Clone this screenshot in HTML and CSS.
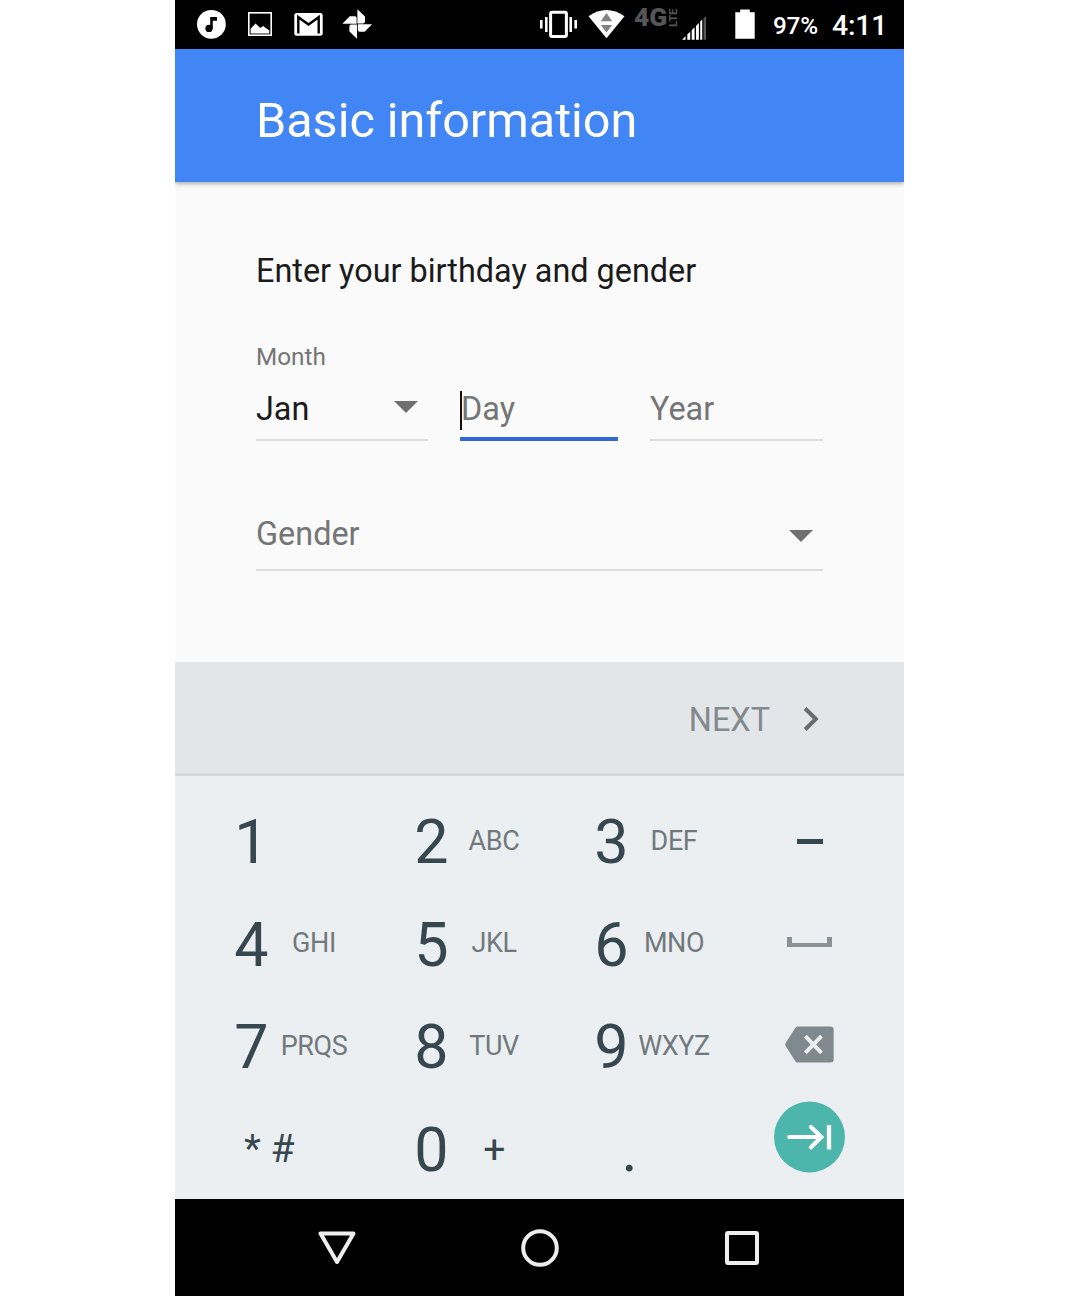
FILE: index.html
```html
<!DOCTYPE html>
<html lang="en">
<head>
<meta charset="utf-8">
<title>Basic information</title>
<link rel="stylesheet" href="styles.css">
</head>
<body>
<main class="phone">
  <div class="status">
    <svg class="note" width="30" height="48" viewBox="197 0 30 48"><circle cx="211.4" cy="24.3" r="14.4" fill="#fff"/><circle cx="209" cy="28.4" r="3.6" fill="#000"/><path d="M210.2 28V17h6.800v3.800h-4.200v7.600z" fill="#000"/></svg>
    <svg class="photo" width="24" height="48" viewBox="248 0 24 48"><rect x="248.8" y="12.8" width="22.4" height="22.4" fill="none" stroke="#fff" stroke-width="1.6"/><path d="M250.6 33.6v-4.800l4.900-5.200 4.800 4.400 2.800-2 6.200 4.600v3z" fill="#fff"/></svg>
    <svg class="mail" width="29" height="48" viewBox="294 0 29 48"><rect x="294.300" y="13" width="28.400" height="22.700" rx="2.500" fill="#fff"/><path d="M298.300 33.400V17.200l10.200 7.300 10.200-7.300v16.200" fill="none" stroke="#000" stroke-width="2.400"/><path d="M299 15.200h19l-9.500 6.600z" fill="#fff"/></svg>
    <svg class="pinwheel" width="30" height="48" viewBox="342 0 30 48"><g fill="#fff"><path d="M357.400 23.400V9.200l7.600 7.400v5q0 1.800-1.800 1.800z"/><path d="M357.400 23.400V9.200l7.600 7.400v5q0 1.800-1.800 1.800z" transform="rotate(90 357.200 24)"/><path d="M357.400 23.400V9.200l7.600 7.400v5q0 1.800-1.800 1.800z" transform="rotate(180 357.200 24)"/><path d="M357.400 23.400V9.200l7.600 7.400v5q0 1.800-1.800 1.800z" transform="rotate(270 357.200 24)"/></g></svg>
    <svg class="vibrate" width="37" height="48" viewBox="540 0 37 48"><rect x="550.600" y="12.200" width="15.800" height="24.200" rx="1.500" fill="none" stroke="#fff" stroke-width="3"/><path d="M541.300 20v8.500M546.300 17v15M570.700 17v15M575.700 20v8.500" stroke="#fff" stroke-width="2.600"/></svg>
    <svg class="wifi" width="37" height="48" viewBox="588.200 0 37 48"><path d="M606.700 38.200L588.700 16.200Q606.700 3.600 624.700 16.200z" fill="#fff"/><path d="M601 21.200l5.700-8.200 5.700 8.200zM601 25l5.700 7.600 5.700-7.600z" fill="#828282"/></svg>
    <span class="net">4G</span><span class="lte">LTE</span>
    <svg class="signal" width="25" height="48" viewBox="682 0 25 48"><path d="M682 39.800l3.600-3.600v3.600zM687.300 39.800v-5.200l2.900-2.900v8.100zM691.700 39.800v-9.600l2.900-2.900v12.500zM696 39.800V25.900l2.900-2.900v16.800zM700.200 39.800V21.600l2-2v20.200z" fill="#fff"/><path d="M703.500 39.800V18.600l2.600-2.600v23.800z" fill="#555"/></svg>
    <svg class="battery" width="20" height="48" viewBox="735 0 20 48"><path d="M740.200 12.200V9.600h9.600v2.600h4.900v26.600h-19.400V12.200z" fill="#fff"/></svg>
    <span class="percent">97%</span>
    <span class="clock">4:11</span>
  </div>

  <header class="appbar"><h1>Basic information</h1></header>

  <section class="form">
    <p class="prompt">Enter your birthday and gender</p>
    <p class="caption">Month</p>
    <div class="fields">
      <div class="field month"><span>Jan</span><svg width="24" height="12" viewBox="0 0 24 12"><path d="M0 0h24L12 12z"/></svg></div>
      <div class="field day"><i class="caret"></i><span>Day</span></div>
      <div class="field year"><span>Year</span></div>
    </div>
    <div class="field gender"><span>Gender</span><svg width="24" height="12" viewBox="0 0 24 12"><path d="M0 0h24L12 12z"/></svg></div>
  </section>

  <div class="next"><span>NEXT</span><svg width="17" height="26" viewBox="0 0 17 26"><path d="M2.200 2.500L12.800 13 2.200 23.500" fill="none" stroke="#696d70" stroke-width="4"/></svg></div>

  <section class="keypad">
    <div class="key"><b>1</b></div>
    <div class="key"><b>2</b><span>ABC</span></div>
    <div class="key"><b>3</b><span>DEF</span></div>
    <div class="action"><i class="dash"></i></div>

    <div class="key"><b>4</b><span>GHI</span></div>
    <div class="key"><b>5</b><span>JKL</span></div>
    <div class="key"><b>6</b><span>MNO</span></div>
    <div class="action"><i class="space"></i></div>

    <div class="key"><b>7</b><span>PRQS</span></div>
    <div class="key"><b>8</b><span>TUV</span></div>
    <div class="key"><b>9</b><span>WXYZ</span></div>
    <div class="action erase"><svg width="49" height="37" viewBox="0 0 49 37"><path d="M12.500 .5H45.500Q48.700 .5 48.700 3.700V33.300Q48.700 36.500 45.500 36.500H12.500Q11.200 36.500 10.200 35L.8 20.300Q-.2 18.500 .8 16.700L10.200 2Q11.200 .5 12.500 .5z" fill="#80898e"/><path d="M20.300 10.200l16.200 16.600M36.500 10.200L20.300 26.800" stroke="#ebeff2" stroke-width="4"/></svg></div>

    <div class="key symbols">* #</div>
    <div class="key"><b>0</b><span class="plus">+</span></div>
    <div class="key period"><b>.</b></div>
    <div class="action enter"><svg width="72" height="72" viewBox="0 0 72 72"><circle cx="36.500" cy="36" r="35.500" fill="#4db6ac"/><path d="M16.300 36H47.500M38 26L48.300 36 38 46.200" fill="none" stroke="#fff" stroke-width="4.200" stroke-linecap="round"/><path d="M56 24v24.500" stroke="#fff" stroke-width="4.300"/></svg></div>
  </section>

  <nav class="navbar">
    <svg width="38" height="34" viewBox="0 0 38 34"><path d="M2.500 2.500h33L19 31z" fill="none" stroke="#eee" stroke-width="4" stroke-linejoin="round"/></svg>
    <svg class="home" width="38" height="38" viewBox="0 0 38 38"><circle cx="19" cy="19" r="16.800" fill="none" stroke="#eee" stroke-width="4"/></svg>
    <svg width="34" height="34" viewBox="0 0 34 34"><rect x="2" y="2" width="30" height="30" rx="1" fill="none" stroke="#eee" stroke-width="4"/></svg>
  </nav>
</main>
</body>
</html>
```
FILE: styles.css
```css
* { box-sizing: border-box; }
body { margin: 0; background: #fff; font-family: Roboto, sans-serif; }
h1, p { margin: 0; font-weight: 400; }
svg { display: block; flex: none; }

.phone {
  width: 729px;
  height: 1296px;
  margin-left: 175px;
  display: flex;
  flex-direction: column;
  overflow: hidden;
  background: #fafafa;
}

/* Status bar */
.status {
  height: 49px;
  flex: none;
  display: flex;
  align-items: flex-start;
  padding-left: 22px;
  background: #000;
  color: #fff;
  font-weight: 500;
  white-space: nowrap;
  line-height: 52px;
}
.photo { margin-left: 21px; }
.mail { margin-left: 22px; }
.pinwheel { margin-left: 19px; }
.vibrate { margin-left: 168px; }
.wifi { margin-left: 11px; }
.net { width: 34px; margin-left: 9px; font-size: 26.500px; font-weight: 900; line-height: 34px; color: #555; }
.lte { width: 11px; height: 21px; margin-top: 6px; writing-mode: vertical-rl; transform: rotate(180deg); font-size: 11.500px; font-weight: 700; line-height: 11px; color: #555; }
.signal { margin-left: 3px; }
.battery { margin-left: 28px; }
.percent { width: 46px; margin-left: 18px; font-size: 24.300px; letter-spacing: -.2px; }
.clock { margin-left: 13px; font-size: 28.400px; letter-spacing: -.2px; }

.appbar {
  height: 133px;
  flex: none;
  padding: 43px 81px 0;
  background: #4285f4;
  color: #fff;
  box-shadow: 0 1px 5px rgba(0, 0, 0, .4);
  z-index: 1;
}
.appbar h1 { font-size: 48.600px; line-height: 58px; letter-spacing: -.05px; }

/* Form */
.form {
  height: 480px;
  flex: none;
  padding: 69px 81px 0;
  font-size: 32.400px;
  line-height: 40px;
}
.prompt { color: #1b1b1b; }
.caption { margin-top: 50px; font-size: 24.300px; line-height: 32px; color: #757575; }
.fields { display: flex; gap: 32px; }
.field {
  display: flex;
  justify-content: space-between;
  border-bottom: 2px solid #dedede;
  color: #757575;
}
.field svg { fill: #707070; }
.fields .field { height: 68px; padding-top: 16px; }
.month { width: 172px; }
.fields .month { color: #1b1b1b; }
.month svg { margin: 12px 10px 0 0; }
.fields .day { position: relative; width: 158px; padding-left: 1px; border-bottom: 4px solid #3367d6; }
.caret { position: absolute; left: 0; top: 18px; width: 2px; height: 39px; background: #111; }
.year { width: 173px; }
.gender { height: 58px; margin-top: 72px; padding-top: 1px; }
.gender svg { margin: 16px 10px 0 0; }

.next {
  height: 114px;
  flex: none;
  display: flex;
  justify-content: flex-end;
  align-items: center;
  gap: 33px;
  padding: 2px 84px 0 0;
  border-bottom: 3px solid #d6dadd;
  background: #e3e6e9;
  color: #84898c;
  font-size: 32.400px;
}
.next span { padding-top: 2px; }

/* Keypad */
.keypad {
  height: 423px;
  flex: none;
  display: grid;
  grid-template-columns: 180px 180px 180px 99px;
  grid-template-rows: repeat(4, 102.600px);
  padding: 15px 0 0 45px;
  background: #ebeff2;
}
.key { display: flex; align-items: center; color: #37474f; }
.key b { width: 63px; text-align: center; font-size: 61px; font-weight: 400; line-height: 70px; }
.key span { width: 62px; display: flex; justify-content: center; font-size: 27px; letter-spacing: -.4px; color: #72797d; padding-bottom: 3px; }
.key .plus { font-size: 39px; color: #37474f; padding: 0; }
.key.symbols { padding: 0 0 3px 24px; font-size: 39px; }
.period b { width: 99px; }
.action { display: flex; align-items: center; justify-content: center; padding-bottom: 2px; }
.dash { width: 26px; height: 5px; background: #37474f; }
.space { width: 45px; height: 10px; margin-bottom: 4px; border: solid #899195; border-width: 0 5px 4px; }
.erase { padding-bottom: 6px; }
.enter { padding: 0 1px 27px 0; }

.navbar {
  height: 97px;
  flex: none;
  display: flex;
  justify-content: space-between;
  align-items: center;
  padding: 0 145px 0 143px;
  background: #000;
}
.home { margin-right: 2px; }
```
